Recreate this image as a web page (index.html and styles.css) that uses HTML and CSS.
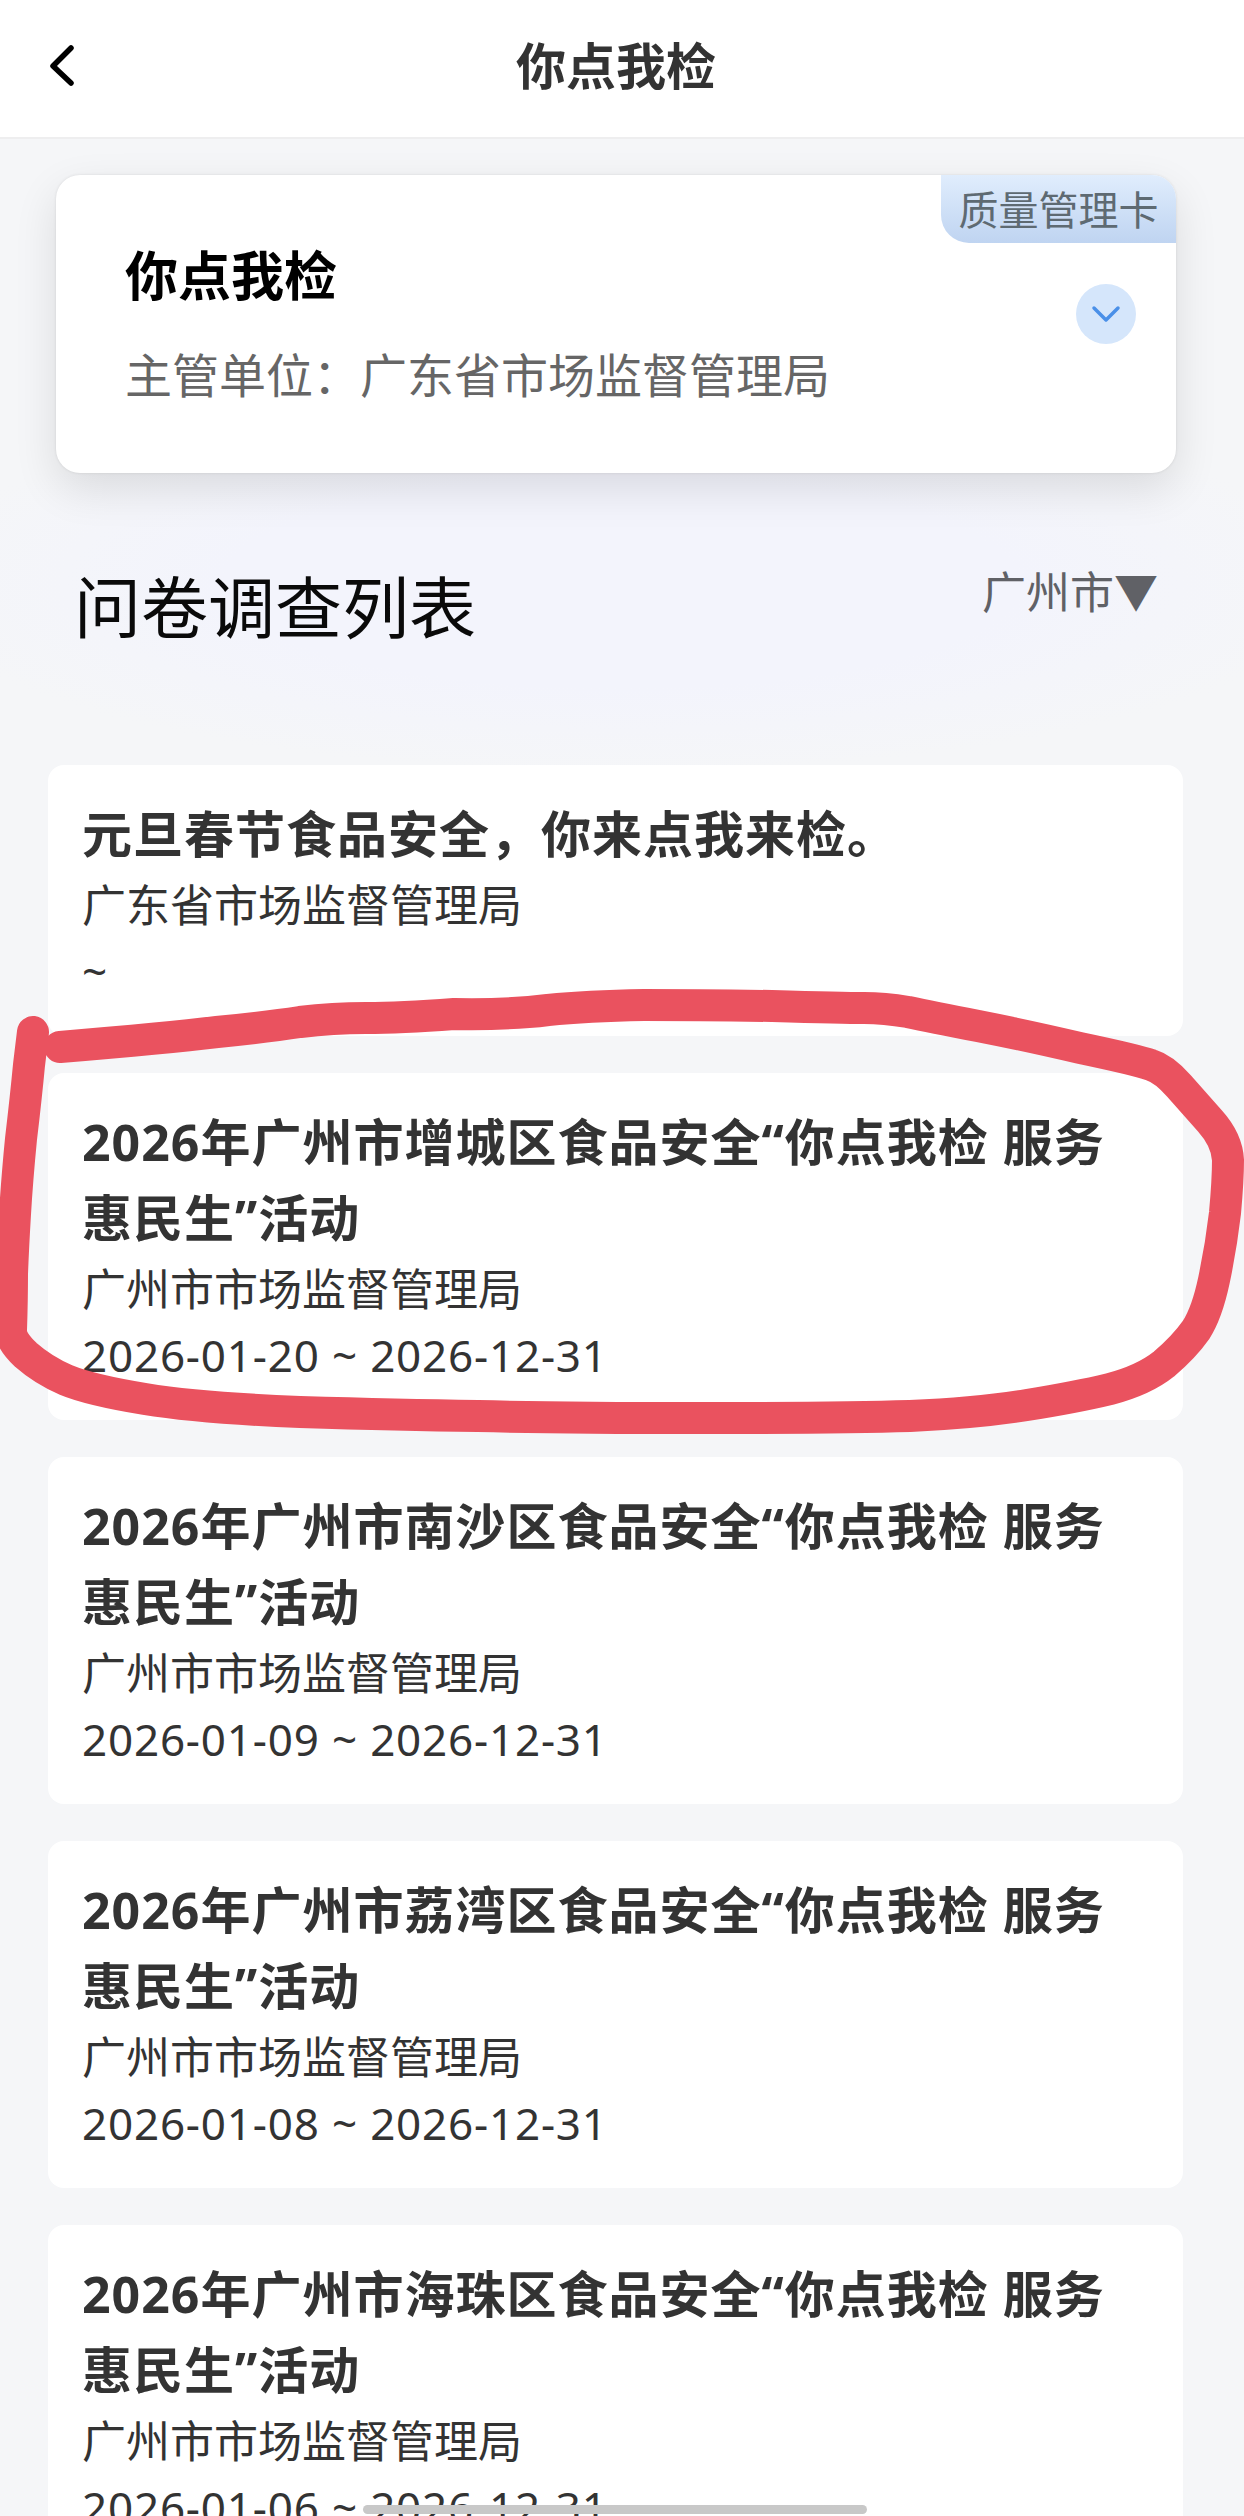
FILE: index.html
```html
<!DOCTYPE html>
<html lang="zh-CN">
<head>
<meta charset="utf-8">
<title>你点我检</title>
<link rel="stylesheet" href="styles.css">
</head>
<body>
<div class="page">
  <header class="nav">
    <svg class="nav-back" viewBox="0 0 30 44" width="30" height="44"><path d="M24 4 L6 22 L24 39" fill="none" stroke="#000" stroke-width="5.5" stroke-linecap="round" stroke-linejoin="round"/></svg>
    <h1 class="nav-title">你点我检</h1>
  </header>
  <section class="hero">
    <div class="hero-tag">质量管理卡</div>
    <div class="hero-body">
      <div class="hero-text">
        <h2 class="hero-title">你点我检</h2>
        <p class="hero-sub">主管单位：广东省市场监督管理局</p>
      </div>
      <div class="hero-toggle">
        <svg viewBox="0 0 30 18" width="30" height="18"><path d="M3 3 L15 15 L27 3" fill="none" stroke="#4a90e8" stroke-width="3.5" stroke-linecap="round" stroke-linejoin="round"/></svg>
      </div>
    </div>
  </section>
  <div class="list-head">
    <h2 class="list-title">问卷调查列表</h2>
    <div class="list-city">广州市▼</div>
  </div>
  <main class="list">
    <article class="item">
      <h3 class="item-title">元旦春节食品安全，你来点我来检。</h3>
      <p class="item-line">广东省市场监督管理局</p>
      <p class="item-line item-date">~</p>
    </article>
    <article class="item">
      <h3 class="item-title">2026年广州市增城区食品安全“你点我检 服务惠民生”活动</h3>
      <p class="item-line">广州市市场监督管理局</p>
      <p class="item-line item-date">2026-01-20 ~ 2026-12-31</p>
    </article>
    <article class="item">
      <h3 class="item-title">2026年广州市南沙区食品安全“你点我检 服务惠民生”活动</h3>
      <p class="item-line">广州市市场监督管理局</p>
      <p class="item-line item-date">2026-01-09 ~ 2026-12-31</p>
    </article>
    <article class="item">
      <h3 class="item-title">2026年广州市荔湾区食品安全“你点我检 服务惠民生”活动</h3>
      <p class="item-line">广州市市场监督管理局</p>
      <p class="item-line item-date">2026-01-08 ~ 2026-12-31</p>
    </article>
    <article class="item">
      <h3 class="item-title">2026年广州市海珠区食品安全“你点我检 服务惠民生”活动</h3>
      <p class="item-line">广州市市场监督管理局</p>
      <p class="item-line item-date">2026-01-06 ~ 2026-12-31</p>
    </article>
  </main>
  <svg class="scribble" viewBox="0 0 1244 2516" width="1244" height="2516">
    <path d="M60 1047 Q167 1038 217 1032 Q267 1027 300 1022 Q333 1018 366 1018 Q400 1018 454 1014 Q508 1015 548 1010 Q587 1006 644 1005 Q700 1005 772 1006 Q844 1008 864 1008 Q884 1008 908 1012 Q931 1017 978 1026 Q1024 1035 1080 1048 Q1137 1060 1151 1065 Q1164 1069 1179 1086 Q1194 1103 1210 1121 Q1227 1140 1228 1160 Q1228 1180 1225 1213 Q1221 1247 1214 1280 Q1207 1313 1196 1330 Q1184 1347 1164 1364 Q1144 1380 1110 1389 Q1077 1397 1027 1405 Q977 1413 910 1416 Q844 1418 700 1418 Q555 1418 478 1416 Q400 1415 300 1412 Q200 1408 145 1399 Q90 1390 66 1380 Q43 1370 26 1355 Q10 1340 11 1330 Q12 1300 12 1274 Q13 1247 15 1214 Q17 1180 21 1139 Q26 1097 29 1065 L33 1032" fill="none" stroke="#ea525f" stroke-width="32" stroke-linecap="round" stroke-linejoin="round"/>
  </svg>
  <div class="scrollbar"></div>
</div>
</body>
</html>
```

FILE: styles.css
```css
* { box-sizing: border-box; }
html, body { margin: 0; padding: 0; }
body {
  font-family: "Noto Sans", "Noto Sans CJK SC", sans-serif;
  background: #f5f6f8;
}
h1, h2, h3, p { margin: 0; }
.page {
  position: relative;
  width: 1244px;
  height: 2516px;
  overflow: hidden;
  background: #f5f6f8;
}
.nav {
  position: relative;
  height: 139px;
  background: #fff;
  border-bottom: 2px solid #eeeeef;
  display: flex;
  align-items: center;
  justify-content: center;
  padding: 0 12px 5px 0;
}
.nav-back {
  position: absolute;
  left: 47px;
  top: 44px;
}
.nav-title {
  font-size: 50px;
  line-height: 60px;
  font-weight: 700;
  color: #333;
}
.hero {
  position: relative;
  z-index: 1;
  width: 1120px;
  height: 298px;
  margin: 36px 0 0 56px;
  background: #fff;
  border-radius: 24px;
  overflow: hidden;
  box-shadow: 0 0 3px rgba(0, 0, 0, .1), 0 16px 44px rgba(0, 0, 0, .11);
}
.hero-tag {
  position: absolute;
  top: 0;
  right: 0;
  width: 235px;
  height: 68px;
  background: linear-gradient(180deg, #e0edfd, #bfd4f1);
  border-bottom-left-radius: 28px;
  color: #5e6a72;
  font-size: 40px;
  line-height: 70px;
  text-align: center;
}
.hero-body {
  display: flex;
  align-items: center;
  justify-content: space-between;
  height: 100%;
  padding: 0 40px 0 69px;
}
.hero-text { padding-top: 2px; }
.hero-title {
  font-size: 53px;
  line-height: 68px;
  font-weight: 700;
  color: #000;
}
.hero-sub {
  margin-top: 32px;
  font-size: 47px;
  line-height: 66px;
  color: #666;
}
.hero-toggle {
  width: 60px;
  height: 60px;
  margin-top: -20px;
  border-radius: 50%;
  background: #d5e6fb;
  display: flex;
  align-items: center;
  justify-content: center;
}
.list-head {
  height: 292px;
  padding: 89px 86px 0 74px;
  display: flex;
  align-items: flex-start;
  justify-content: space-between;
  background:
    radial-gradient(ellipse 720px 190px at 50% 110px, #f3f4fc 55%, rgba(243, 244, 252, 0) 100%);
}
.list-title {
  font-size: 67px;
  line-height: 90px;
  font-weight: 400;
  color: #0a0a0a;
}
.list-city {
  font-size: 44px;
  line-height: 60px;
  color: #606166;
}
.list {
  margin: 0 61px 0 48px;
  display: flex;
  flex-direction: column;
  gap: 37px;
}
.item {
  flex: none;
  background: #fff;
  border-radius: 16px;
  padding: 31px 34px 32px;
}
.item-title {
  padding-right: 20px;
  font-size: 50px;
  line-height: 76px;
  font-weight: 700;
  letter-spacing: 1px;
  color: #333;
}
.item-line {
  font-size: 44px;
  line-height: 66px;
  color: #333;
}
.item-date { letter-spacing: .8px; }
.scribble {
  position: absolute;
  left: 0;
  top: 0;
  pointer-events: none;
}
.scrollbar {
  position: absolute;
  left: 363px;
  top: 2505px;
  width: 504px;
  height: 9px;
  border-radius: 5px;
  background: #c8c8c8;
}
```
